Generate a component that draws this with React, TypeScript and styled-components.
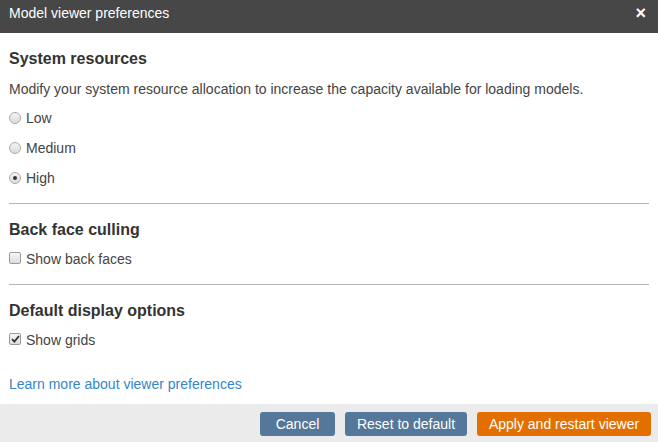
import React from "react";
import styled, { createGlobalStyle } from "styled-components";

const Global = createGlobalStyle`
  html, body { margin: 0; padding: 0; background: #fff; }
  body { font-family: "Liberation Sans", Arial, sans-serif; color: #333; }
  * { box-sizing: border-box; }
`;

const Dialog = styled.div`
  width: 658px;
  height: 442px;
  display: flex;
  flex-direction: column;
  background: #fff;
`;

const Header = styled.div`
  height: 33px;
  background: #474747;
  color: #fff;
  display: flex;
  align-items: flex-start;
  justify-content: space-between;
  padding: 4px 12px 0 9px;
  font-size: 14px;
  line-height: 18px;
`;

const Close = styled.span`
  font-size: 18px;
  font-weight: bold;
  line-height: 18px;
`;

const Body = styled.div`
  flex: 1;
  padding: 16px 9px 0 9px;
  display: flex;
  flex-direction: column;
`;

const Section = styled.div`
  display: flex;
  flex-direction: column;
`;

const Heading = styled.h3<{ $mt?: number }>`
  margin: ${(p) => p.$mt ?? 0}px 0 0 0;
  font-size: 16px;
  font-weight: bold;
  line-height: 20px;
  color: #333;
`;

const Text = styled.p`
  margin: 10px 0 0 0;
  font-size: 14px;
  line-height: 20px;
  color: #444;
`;

const OptionRow = styled.label<{ $mt: number }>`
  display: flex;
  align-items: center;
  gap: 5px;
  margin-top: ${(p) => p.$mt}px;
  font-size: 14px;
  line-height: 20px;
  color: #444;
`;

const Radio = styled.span<{ $checked?: boolean }>`
  width: 12px;
  height: 12px;
  border-radius: 50%;
  border: 1px solid #aaa;
  background: linear-gradient(#f4f4f4, #dcdcdc);
  display: flex;
  align-items: center;
  justify-content: center;
  &::after {
    content: "";
    width: 4px;
    height: 4px;
    border-radius: 50%;
    background: ${(p) => (p.$checked ? "#333" : "transparent")};
  }
`;

const Check = styled.span`
  width: 12px;
  height: 12px;
  border-radius: 2px;
  border: 1px solid #9a9a9a;
  background: linear-gradient(#f6f6f6, #dedede);
  display: flex;
  align-items: center;
  justify-content: center;
  margin-top: -2px;
`;

const Divider = styled.hr<{ $mt: number }>`
  margin: ${(p) => p.$mt}px 0 0 0;
  border: 0;
  border-top: 1px solid #b5b5b5;
  height: 0;
`;

const Link = styled.a`
  margin-top: 24px;
  font-size: 14px;
  line-height: 20px;
  color: #3486c9;
  text-decoration: none;
`;

const Footer = styled.div`
  height: 38px;
  background: #ebebeb;
  display: flex;
  justify-content: flex-end;
  align-items: flex-start;
  gap: 10px;
  padding: 8px 7px 0 0;
`;

const Button = styled.button<{ $primary?: boolean; $w: number }>`
  width: ${(p) => p.$w}px;
  height: 24px;
  border: 0;
  border-radius: 3px;
  background: ${(p) => (p.$primary ? "#e26f00" : "#557799")};
  color: #fff;
  font-family: "Liberation Sans", Arial, sans-serif;
  font-size: 14px;
  line-height: 24px;
  padding: 0;
  text-align: center;
`;

const CheckMark = () => (
  <svg width="9" height="8" viewBox="0 0 9 8">
    <path d="M1 4.2 L3.4 6.6 L8 1" fill="none" stroke="#333" strokeWidth="1.8" />
  </svg>
);

export default function App() {
  return (
    <>
      <Global />
      <Dialog>
        <Header>
          <span>Model viewer preferences</span>
          <Close>×</Close>
        </Header>
        <Body>
          <Section>
            <Heading>System resources</Heading>
            <Text>
              Modify your system resource allocation to increase the capacity available for loading models.
            </Text>
            <OptionRow $mt={9}>
              <Radio />
              Low
            </OptionRow>
            <OptionRow $mt={10}>
              <Radio />
              Medium
            </OptionRow>
            <OptionRow $mt={10}>
              <Radio $checked />
              High
            </OptionRow>
          </Section>
          <Divider $mt={15} />
          <Section>
            <Heading $mt={16}>Back face culling</Heading>
            <OptionRow $mt={9}>
              <Check />
              Show back faces
            </OptionRow>
          </Section>
          <Divider $mt={15} />
          <Section>
            <Heading $mt={16}>Default display options</Heading>
            <OptionRow $mt={9}>
              <Check>
                <CheckMark />
              </Check>
              Show grids
            </OptionRow>
          </Section>
          <Link href="#">Learn more about viewer preferences</Link>
        </Body>
        <Footer>
          <Button $w={75}>Cancel</Button>
          <Button $w={122}>Reset to default</Button>
          <Button $w={174} $primary>
            Apply and restart viewer
          </Button>
        </Footer>
      </Dialog>
    </>
  );
}
